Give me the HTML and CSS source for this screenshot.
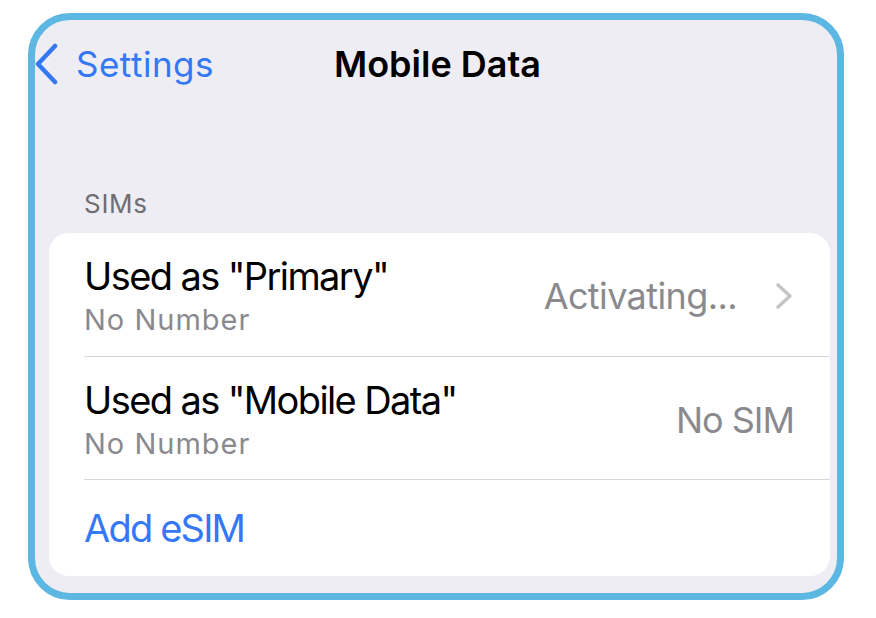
FILE: index.html
```html
<!DOCTYPE html>
<html lang="en">
<head>
<meta charset="utf-8">
<title>Mobile Data</title>
<link rel="stylesheet" href="styles.css">
</head>
<body>
<div class="frame">
  <div class="nav">
    <div class="nav-left">
      <svg class="back-chevron" width="26" height="42" viewBox="0 0 26 42">
        <path d="M20 3 L3 21 L20 39" fill="none" stroke="#3478f6" stroke-width="4.5" stroke-linecap="round" stroke-linejoin="round"/>
      </svg>
      <span class="back-label">Settings</span>
    </div>
    <div class="nav-title">Mobile Data</div>
    <div class="nav-right"></div>
  </div>
  <div class="section-header">SIMs</div>
  <div class="card">
    <div class="row">
      <div class="row-inner first">
        <div class="row-text">
          <div class="row-title">Used as "Primary"</div>
          <div class="row-sub">No Number</div>
        </div>
        <div class="row-detail">
          <span class="detail-text">Activating...</span>
          <svg class="chevron" width="18" height="28" viewBox="0 0 18 28">
            <path d="M3 3 L15 14 L3 25" fill="none" stroke="#c4c4c7" stroke-width="3.5" stroke-linecap="round" stroke-linejoin="round"/>
          </svg>
        </div>
      </div>
    </div>
    <div class="row">
      <div class="row-inner">
        <div class="row-text">
          <div class="row-title">Used as "Mobile Data"</div>
          <div class="row-sub">No Number</div>
        </div>
        <div class="row-detail">
          <span class="detail-text nosim">No SIM</span>
        </div>
      </div>
    </div>
    <div class="row">
      <div class="row-inner last">
        <div class="row-action">Add eSIM</div>
      </div>
    </div>
  </div>
</div>
</body>
</html>
```

FILE: styles.css
```css
* { box-sizing: border-box; }
html, body { margin: 0; padding: 0; background: #ffffff; }
body { font-family: Inter, "Noto Sans", sans-serif; }

.frame {
  margin: 13px 0 0 28px;
  width: 816px;
  height: 587px;
  border: 7px solid #5cb7e2;
  border-radius: 42px;
  background: #efedf4;
  overflow: hidden;
}

.nav {
  height: 88px;
  display: grid;
  grid-template-columns: 1fr auto 1fr;
  align-items: center;
}
.nav-left {
  display: flex;
  align-items: center;
}
.back-chevron { display: block; flex: none; }
.back-label {
  margin-left: 15px;
  font-size: 35px;
  line-height: 42px;
  letter-spacing: 0.5px;
  color: #3478f6;
}
.nav-title {
  font-size: 36px;
  line-height: 42px;
  font-weight: 600;
  color: #000;
  margin-left: 3px;
}

.section-header {
  padding: 80px 0 13px 49px;
  font-size: 26px;
  line-height: 32px;
  letter-spacing: 0.7px;
  color: #6d6d72;
}

.card {
  margin: 0 7px 0 14px;
  background: #ffffff;
  border-radius: 20px;
  overflow: hidden;
}
.row { padding-left: 35px; }
.row-inner {
  display: flex;
  align-items: center;
  justify-content: space-between;
  padding: 21px 37px 17px 0;
  border-bottom: 1px solid #d8d8dc;
}
.row-inner.first { padding-bottom: 18px; }
.row-inner.last {
  border-bottom: none;
  padding: 26px 37px 26px 0;
}
.row-text { display: flex; flex-direction: column; }
.row-title {
  font-size: 38px;
  line-height: 44px;
  letter-spacing: -1.6px;
  color: #000;
}
.row-sub {
  margin-top: 4px;
  font-size: 29px;
  line-height: 36px;
  letter-spacing: 1px;
  color: #8a8a8e;
}
.row-detail {
  display: flex;
  align-items: center;
  gap: 38px;
}
.detail-text {
  font-size: 36px;
  line-height: 42px;
  letter-spacing: -0.6px;
  color: #8a8a8e;
}
.detail-text.nosim { letter-spacing: -1px; margin-right: -1px; }
.chevron { display: block; }
.row-action {
  font-size: 38px;
  line-height: 44px;
  letter-spacing: -1.8px;
  color: #3478f6;
}
```
